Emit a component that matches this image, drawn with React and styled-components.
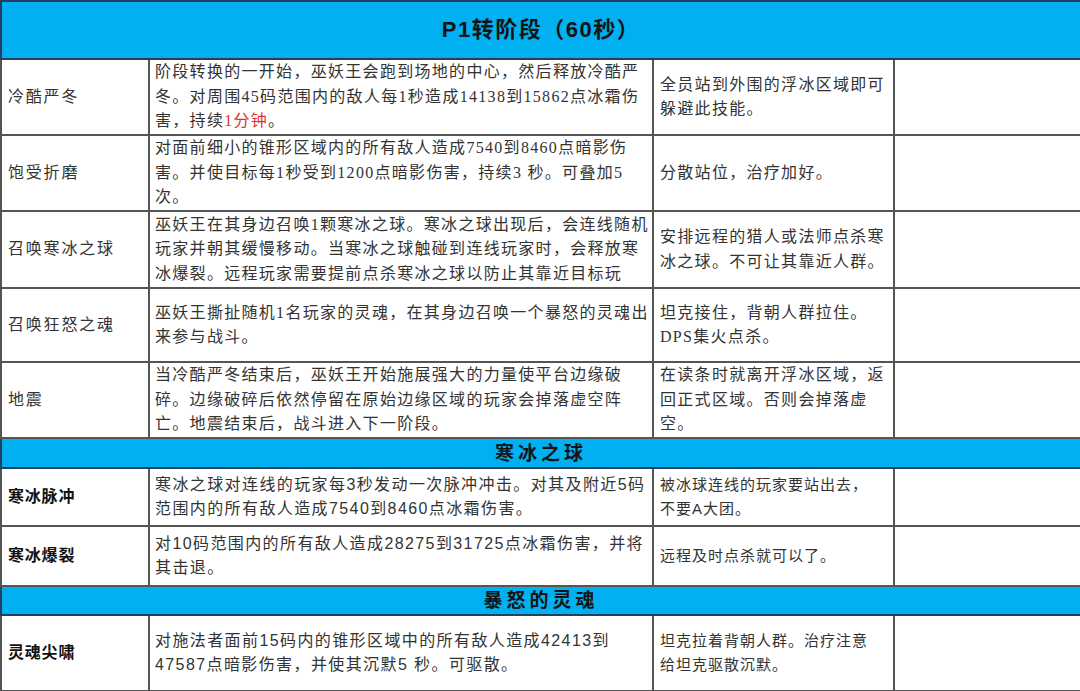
import React from "react";
import styled, { createGlobalStyle, css } from "styled-components";

const GlobalStyle = createGlobalStyle`
  html, body {
    margin: 0;
    padding: 0;
    background: #ffffff;
  }
`;

const serif = `"Liberation Serif", "Noto Sans CJK SC", serif`;
const sans = `"Liberation Sans", "Noto Sans CJK SC", sans-serif`;

const Table = styled.table`
  width: 1080px;
  border-collapse: collapse;
  table-layout: fixed;
  color: #333333;
`;

const Row = styled.tr`
  height: ${(p) => p.$h}px;
`;

const Banner = styled.td`
  background: #00b0f0;
  border: 2px solid #24405e;
  text-align: center;
  vertical-align: middle;
  padding: 0;
  font-family: ${sans};
  font-weight: 700;
  color: #141414;
  font-size: ${(p) => (p.$big ? 22 : 19)}px;
  letter-spacing: ${(p) => (p.$big ? 1.5 : 4)}px;
  line-height: 1;
`;

const Cell = styled.td`
  border: 2px solid #555555;
  vertical-align: middle;
  padding: 0 4px 0 5px;
  white-space: pre;
  overflow: hidden;
  line-height: 24.5px;
  ${(p) =>
    p.$sans
      ? css`
          font-family: ${sans};
          font-size: 16px;
          letter-spacing: 1.4px;
        `
      : css`
          font-family: ${serif};
          font-size: 16px;
          letter-spacing: 1.3px;
        `}
`;

const NameCell = styled(Cell)`
  padding-left: 6px;
  font-weight: ${(p) => (p.$sans ? 700 : 400)};
  color: ${(p) => (p.$sans ? "#111111" : "#333333")};
  letter-spacing: ${(p) => (p.$sans ? 0.8 : 1.8)}px;
`;

const TipCell = styled(Cell)`
  padding-left: 6px;
  ${(p) =>
    p.$sans &&
    css`
      font-size: 15px;
      letter-spacing: 1px;
    `}
`;

const Red = styled.span`
  color: #e0302c;
`;

const phase = [
  {
    h: 76,
    name: "冷酷严冬",
    desc: (
      <>
        {"阶段转换的一开始，巫妖王会跑到场地的中心，然后释放冷酷严\n冬。对周围45码范围内的敌人每1秒造成14138到15862点冰霜伤\n害，持续"}
        <Red>1分钟</Red>
        {"。"}
      </>
    ),
    tip: "全员站到外围的浮冰区域即可\n躲避此技能。",
  },
  {
    h: 76,
    name: "饱受折磨",
    desc: "对面前细小的锥形区域内的所有敌人造成7540到8460点暗影伤\n害。并使目标每1秒受到1200点暗影伤害，持续3 秒。可叠加5\n次。",
    tip: "分散站位，治疗加好。",
  },
  {
    h: 77,
    name: "召唤寒冰之球",
    desc: "巫妖王在其身边召唤1颗寒冰之球。寒冰之球出现后，会连线随机\n玩家并朝其缓慢移动。当寒冰之球触碰到连线玩家时，会释放寒\n冰爆裂。远程玩家需要提前点杀寒冰之球以防止其靠近目标玩",
    tip: "安排远程的猎人或法师点杀寒\n冰之球。不可让其靠近人群。",
  },
  {
    h: 74,
    name: "召唤狂怒之魂",
    desc: "巫妖王撕扯随机1名玩家的灵魂，在其身边召唤一个暴怒的灵魂出\n来参与战斗。",
    tip: "坦克接住，背朝人群拉住。\nDPS集火点杀。",
  },
  {
    h: 76,
    name: "地震",
    desc: "当冷酷严冬结束后，巫妖王开始施展强大的力量使平台边缘破\n碎。边缘破碎后依然停留在原始边缘区域的玩家会掉落虚空阵\n亡。地震结束后，战斗进入下一阶段。",
    tip: "在读条时就离开浮冰区域，返\n回正式区域。否则会掉落虚\n空。",
  },
];

const orb = [
  {
    h: 58,
    name: "寒冰脉冲",
    desc: "寒冰之球对连线的玩家每3秒发动一次脉冲冲击。对其及附近5码\n范围内的所有敌人造成7540到8460点冰霜伤害。",
    tip: "被冰球连线的玩家要站出去，\n不要A大团。",
  },
  {
    h: 60,
    name: "寒冰爆裂",
    desc: "对10码范围内的所有敌人造成28275到31725点冰霜伤害，并将\n其击退。",
    tip: "远程及时点杀就可以了。",
  },
];

const soul = [
  {
    h: 76,
    name: "灵魂尖啸",
    desc: "对施法者面前15码内的锥形区域中的所有敌人造成42413到\n47587点暗影伤害，并使其沉默5 秒。可驱散。",
    tip: "坦克拉着背朝人群。治疗注意\n给坦克驱散沉默。",
  },
];

const SkillRow = ({ skill, sans }) => (
  <Row $h={skill.h}>
    <NameCell $sans={sans}>{skill.name}</NameCell>
    <Cell $sans={sans}>{skill.desc}</Cell>
    <TipCell $sans={sans}>{skill.tip}</TipCell>
    <Cell $sans={sans} />
  </Row>
);

const App = () => {
  return (
    <>
      <GlobalStyle />
      <Table>
        <colgroup>
          <col style={{ width: 148 }} />
          <col style={{ width: 504 }} />
          <col style={{ width: 241 }} />
          <col style={{ width: 187 }} />
        </colgroup>
        <tbody>
          <Row $h={58}>
            <Banner colSpan={4} $big>
              P1转阶段（60秒）
            </Banner>
          </Row>
          {phase.map((s) => (
            <SkillRow key={s.name} skill={s} />
          ))}
          <Row $h={30}>
            <Banner colSpan={4}>寒冰之球</Banner>
          </Row>
          {orb.map((s) => (
            <SkillRow key={s.name} skill={s} sans />
          ))}
          <Row $h={29}>
            <Banner colSpan={4}>暴怒的灵魂</Banner>
          </Row>
          {soul.map((s) => (
            <SkillRow key={s.name} skill={s} sans />
          ))}
        </tbody>
      </Table>
    </>
  );
};

export default App;
